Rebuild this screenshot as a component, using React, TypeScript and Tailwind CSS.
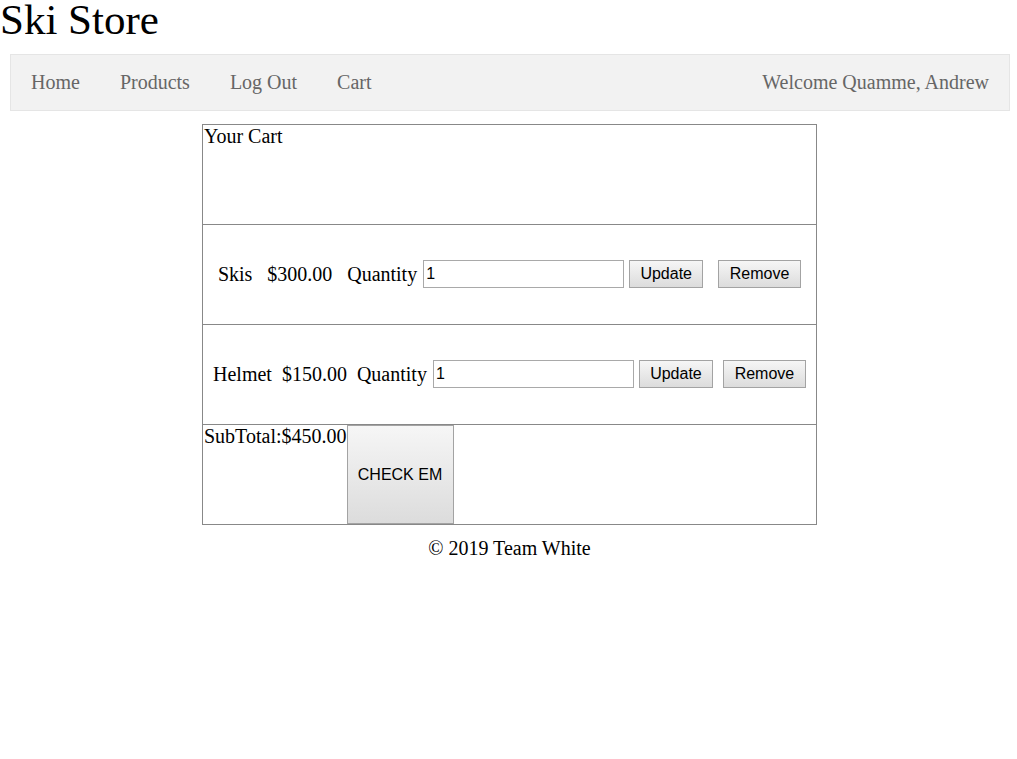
import React from 'react';

const serif = "font-['Liberation_Serif','Times_New_Roman',serif]";
const btn =
  "font-['Liberation_Sans',Arial,sans-serif] text-[16px] text-black border border-[#a3a3a3] bg-gradient-to-b from-[#f6f6f6] to-[#dcdcdc] leading-none";

interface Item {
  name: string;
  price: string;
  qty: string;
}

const items: Item[] = [
  { name: 'Skis', price: '$300.00', qty: '1' },
  { name: 'Helmet', price: '$150.00', qty: '1' },
];

const CartRow: React.FC<{ item: Item }> = ({ item }) => (
  <div className="h-[100px] border-t border-[#888] flex items-center justify-evenly pb-[1px]">
    <span>{item.name}</span>
    <span>{item.price}</span>
    <span className="flex items-center">
      <span className="mr-[6px]">Quantity</span>
      <input
        defaultValue={item.qty}
        className="w-[201px] h-[28px] border border-[#a9a9a9] px-[2px] font-['Liberation_Sans',Arial,sans-serif] text-[16px] text-black outline-none"
      />
      <button className={`${btn} ml-[5px] w-[74px] h-[28px]`}>Update</button>
    </span>
    <button className={`${btn} w-[83px] h-[28px]`}>Remove</button>
  </div>
);

export default function App() {
  return (
    <div className={`min-h-screen bg-white text-black ${serif} text-[20px] leading-[23px]`}>
      <h1 className="text-[43px] leading-[40px] font-normal">Ski Store</h1>

      {/* Nav bar */}
      <nav className="mt-[14px] ml-[10px] mr-[7px] h-[57px] bg-[#f2f2f2] border border-[#e5e5e5] flex items-center justify-between text-[#666]">
        <div className="flex">
          {['Home', 'Products', 'Log Out', 'Cart'].map((l) => (
            <a key={l} className="px-[20px]">
              {l}
            </a>
          ))}
        </div>
        <span className="px-[20px]">Welcome Quamme, Andrew</span>
      </nav>

      {/* Cart */}
      <div className="mt-[13px] ml-[202px] w-[615px] border border-[#888]">
        <div className="h-[99px] px-[1px] leading-[22px]">Your Cart</div>
        {items.map((it) => (
          <CartRow key={it.name} item={it} />
        ))}
        <div className="h-[100px] border-t border-[#888] flex items-start">
          <span className="pl-[1px] leading-[22px]">SubTotal:$450.00</span>
          <button className={`${btn} w-[107px] h-full`}>CHECK EM</button>
        </div>
      </div>

      <footer className="mt-[12px] text-center pl-[2px]">© 2019 Team White</footer>
    </div>
  );
}
